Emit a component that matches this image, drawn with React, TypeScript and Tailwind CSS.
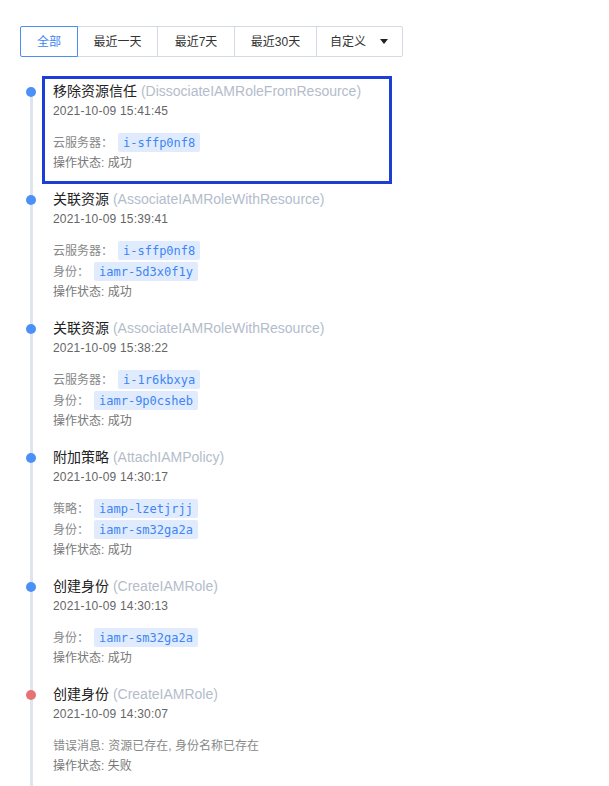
const FONT = '[font-family:"Liberation_Sans","Noto_Sans_CJK_SC",sans-serif]';

type Row = { label: string; tag?: string; text?: string };

interface Item {
  title: string;
  action: string;
  time: string;
  rows: Row[];
  status: string;
  failed?: boolean;
}

const TABS = [
  { label: '全部', w: 'w-[58px]' },
  { label: '最近一天', w: 'w-[81px]' },
  { label: '最近7天', w: 'w-[78px]' },
  { label: '最近30天', w: 'w-[83px]' },
];

const ITEMS: Item[] = [
  {
    title: '移除资源信任',
    action: 'DissociateIAMRoleFromResource',
    time: '2021-10-09 15:41:45',
    rows: [{ label: '云服务器：', tag: 'i-sffp0nf8' }],
    status: '成功',
  },
  {
    title: '关联资源',
    action: 'AssociateIAMRoleWithResource',
    time: '2021-10-09 15:39:41',
    rows: [
      { label: '云服务器：', tag: 'i-sffp0nf8' },
      { label: '身份：', tag: 'iamr-5d3x0f1y' },
    ],
    status: '成功',
  },
  {
    title: '关联资源',
    action: 'AssociateIAMRoleWithResource',
    time: '2021-10-09 15:38:22',
    rows: [
      { label: '云服务器：', tag: 'i-1r6kbxya' },
      { label: '身份：', tag: 'iamr-9p0csheb' },
    ],
    status: '成功',
  },
  {
    title: '附加策略',
    action: 'AttachIAMPolicy',
    time: '2021-10-09 14:30:17',
    rows: [
      { label: '策略：', tag: 'iamp-lzetjrjj' },
      { label: '身份：', tag: 'iamr-sm32ga2a' },
    ],
    status: '成功',
  },
  {
    title: '创建身份',
    action: 'CreateIAMRole',
    time: '2021-10-09 14:30:13',
    rows: [{ label: '身份：', tag: 'iamr-sm32ga2a' }],
    status: '成功',
  },
  {
    title: '创建身份',
    action: 'CreateIAMRole',
    time: '2021-10-09 14:30:07',
    rows: [{ label: '错误消息:', text: '资源已存在, 身份名称已存在' }],
    status: '失败',
    failed: true,
  },
];

function TimelineItem({ item, first, active }: { item: Item; first: boolean; active: boolean }) {
  return (
    <div className="flex">
      <div className="w-[22px] flex flex-col items-center shrink-0">
        <div className={`w-[3px] h-[11px] ${first ? '' : 'bg-[#dfe5ee]'}`} />
        <div className={`w-[10px] h-[10px] rounded-full ${item.failed ? 'bg-[#e57373]' : 'bg-[#4a90f7]'}`} />
        <div className="w-[3px] flex-1 bg-[#dfe5ee]" />
      </div>
      <div
        className={`w-[350px] border-[3px] pt-[3px] pb-[8px] px-[8px] ${
          active ? 'border-[#1b3fd6]' : 'border-transparent'
        }`}
      >
        <div className="text-[14px] leading-[19px] text-[#222]">
          {item.title} <span className="text-[#b4bccb]">({item.action})</span>
        </div>
        <div className="text-[12px] leading-[20px] text-[#666] tracking-[0.2px] mb-[11px]">{item.time}</div>
        {item.rows.map((r, i) => (
          <div key={i} className="h-[21px] flex items-center text-[12px] text-[#888]">
            <span>{r.label}</span>
            {r.tag && (
              <span className="ml-[5px] h-[19px] px-[5px] flex items-center bg-[#e0ecfd] text-[#3d85f5] rounded-[2px] text-[12px] [font-family:'DejaVu_Sans_Mono',monospace]">
                {r.tag}
              </span>
            )}
            {r.text && <span className="ml-[4px]">{r.text}</span>}
          </div>
        ))}
        <div className="h-[20px] flex items-center text-[12px] text-[#777]">操作状态: {item.status}</div>
      </div>
    </div>
  );
}

export default function App() {
  return (
    <div className={`min-h-[786px] bg-white pl-[20px] pt-[26px] ${FONT}`}>
      <div className="flex text-[12px] text-[#333]">
        {TABS.map((t, i) => (
          <div
            key={t.label}
            className={`${t.w} h-[31px] flex items-center justify-center border ${
              i === 0
                ? 'border-[#4a8ef5] text-[#3d85f5] rounded-l-[2px] relative z-10'
                : 'border-[#d3dae4] -ml-px'
            }`}
          >
            {t.label}
          </div>
        ))}
        <div className="w-[87px] -ml-px h-[31px] flex items-center border border-[#d3dae4] rounded-r-[2px] pl-[13px]">
          <span>自定义</span>
          <svg width="8" height="5" viewBox="0 0 8 5" className="ml-[14px]">
            <path d="M0 0h8L4 5z" fill="#222" />
          </svg>
        </div>
      </div>
      <div className="mt-[19px]">
        {ITEMS.map((it, i) => (
          <TimelineItem key={i} item={it} first={i === 0} active={i === 0} />
        ))}
      </div>
    </div>
  );
}
